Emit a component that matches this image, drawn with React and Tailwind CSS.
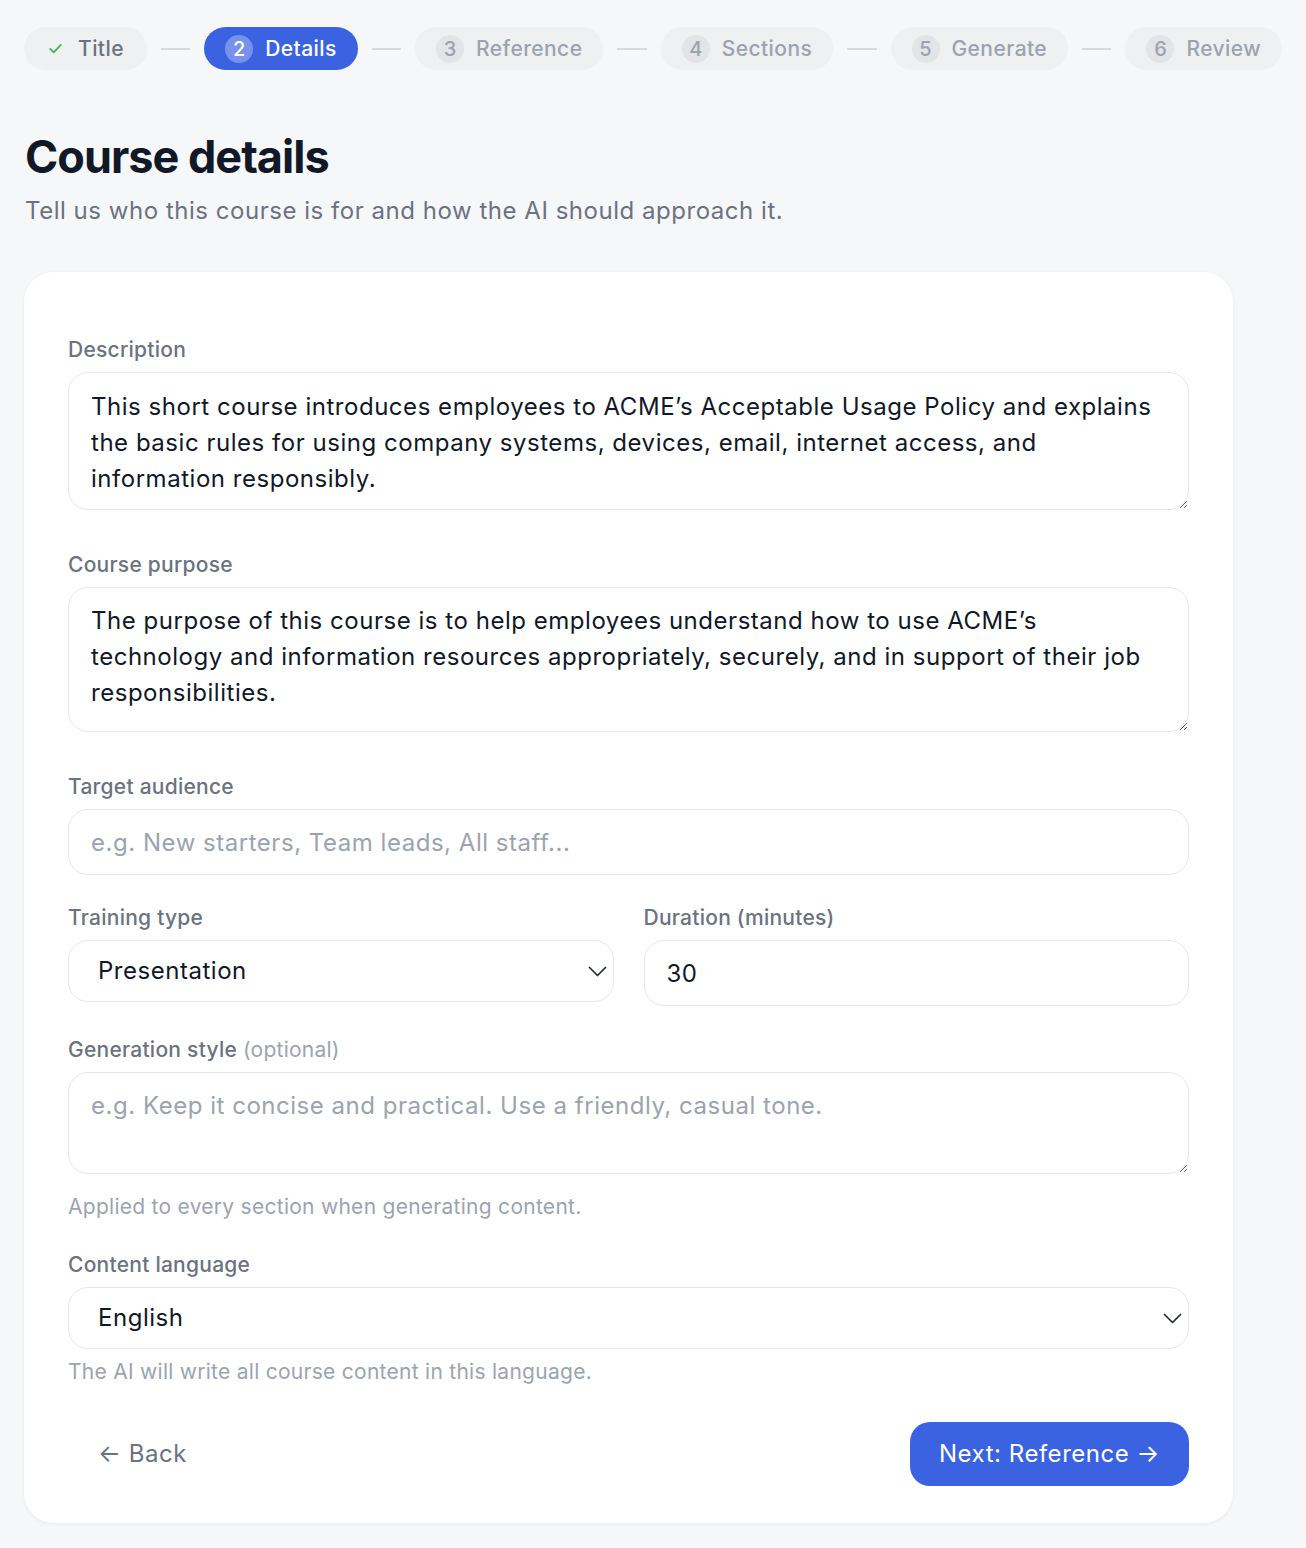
import React from "react";

function Check() {
  return (
    <svg width="17" height="17" viewBox="0 0 24 24" fill="none" stroke="#3fb950" strokeWidth="2.6" strokeLinecap="round" strokeLinejoin="round">
      <path d="M4.5 12.5l5 5L19.5 7" />
    </svg>
  );
}

function Chevron() {
  return (
    <svg width="19" height="11" viewBox="0 0 19 11" fill="none" stroke="#1f2937" strokeWidth="1.7" strokeLinecap="round" strokeLinejoin="round">
      <path d="M1.5 1.5l8 8 8-8" />
    </svg>
  );
}

function Step({ n, label }) {
  return (
    <div className="flex h-[43px] items-center gap-[12px] rounded-full bg-[#eff0f2] px-[21px]">
      <span className="flex h-[28px] w-[28px] items-center justify-center rounded-full bg-[#e3e4e8] text-[20px] font-medium text-[#9ca3af]">
        {n}
      </span>
      <span className="text-[21px] font-medium tracking-[0.02em] text-[#9ca3af]">{label}</span>
    </div>
  );
}

function Line() {
  return <div className="h-[2px] w-[30px] bg-[#d7d9de]" />;
}

const labelCls = "block text-[21px] leading-[30px] font-medium tracking-[0.012em] text-[#6b7280] mb-[7px]";
const boxCls =
  "w-full rounded-[20px] border border-[#e5e7eb] bg-white px-[22px] text-[24px] leading-[36px] tracking-[0.022em] text-[#111827] placeholder:text-[#9ca3af] outline-none";

export default function App() {
  return (
    <div className="min-h-screen bg-[#f6f7f9] px-[24px] pt-[27px] pb-[26px] font-['Inter',sans-serif]">
      {/* Stepper */}
      <div className="flex items-center gap-[14px]">
        <div className="flex h-[43px] items-center gap-[14px] rounded-full bg-[#eff0f2] px-[23px]">
          <Check />
          <span className="text-[21px] font-medium tracking-[0.02em] text-[#6b7280]">Title</span>
        </div>
        <Line />
        <div className="flex h-[43px] items-center gap-[12px] rounded-full bg-[#3b63e1] px-[21px]">
          <span className="flex h-[28px] w-[28px] items-center justify-center rounded-full bg-[#7692ec] text-[20px] font-medium text-white">
            2
          </span>
          <span className="text-[21px] font-medium tracking-[0.02em] text-white">Details</span>
        </div>
        <Line />
        <Step n="3" label="Reference" />
        <Line />
        <Step n="4" label="Sections" />
        <Line />
        <Step n="5" label="Generate" />
        <Line />
        <Step n="6" label="Review" />
      </div>

      {/* Heading */}
      <h1 className="mt-[60px] pl-[1px] text-[45px] leading-[54px] font-bold tracking-[-0.022em] text-[#111827]">
        Course details
      </h1>
      <p className="mt-[9px] pl-[1px] text-[24px] leading-[36px] tracking-[0.022em] text-[#6b7280]">
        Tell us who this course is for and how the AI should approach it.
      </p>

      {/* Card */}
      <div className="mt-[43px] w-[1209px] rounded-[30px] bg-white px-[44px] pt-[63px] pb-[37px] shadow-[0_1px_4px_rgba(15,23,42,0.06)]">
        <label className={labelCls}>Description</label>
        <textarea
          className={boxCls + " block h-[138px] pt-[16px] pb-[12px]"}
          defaultValue="This short course introduces employees to ACME’s Acceptable Usage Policy and explains the basic rules for using company systems, devices, email, internet access, and information responsibly."
        />

        <label className={labelCls + " mt-[40px]"}>Course purpose</label>
        <textarea
          className={boxCls + " block h-[145px] pt-[15px] pb-[12px]"}
          defaultValue="The purpose of this course is to help employees understand how to use ACME’s technology and information resources appropriately, securely, and in support of their job responsibilities."
        />

        <label className={labelCls + " mt-[40px]"}>Target audience</label>
        <input
          className={boxCls + " block h-[66px] py-[14px]"}
          placeholder="e.g. New starters, Team leads, All staff..."
        />

        <div className="mt-[28px] grid grid-cols-2 gap-x-[30px]">
          <div>
            <label className={labelCls}>Training type</label>
            <div className="flex h-[62px] items-center justify-between rounded-[20px] border border-[#e5e7eb] bg-white pl-[29px] pr-[6px] text-[24px] tracking-[0.022em] text-[#111827]">
              <span>Presentation</span>
              <Chevron />
            </div>
          </div>
          <div>
            <label className={labelCls}>Duration (minutes)</label>
            <input className={boxCls + " block h-[66px] py-[14px]"} defaultValue="30" />
          </div>
        </div>

        <label className={labelCls + " mt-[29px]"}>
          Generation style <span className="font-normal text-[#9ca3af]">(optional)</span>
        </label>
        <textarea
          className={boxCls + " block h-[102px] pt-[15px] pb-[13px]"}
          placeholder="e.g. Keep it concise and practical. Use a friendly, casual tone."
        />
        <p className="mt-[18px] text-[21px] leading-[30px] tracking-[0.013em] text-[#9ca3af]">
          Applied to every section when generating content.
        </p>

        <label className={labelCls + " mt-[28px]"}>Content language</label>
        <div className="flex h-[62px] items-center justify-between rounded-[20px] border border-[#e5e7eb] bg-white pl-[29px] pr-[6px] text-[24px] tracking-[0.022em] text-[#111827]">
          <span>English</span>
          <Chevron />
        </div>
        <p className="mt-[8px] text-[21px] leading-[30px] tracking-[0.013em] text-[#9ca3af]">
          The AI will write all course content in this language.
        </p>

        <div className="mt-[35px] flex items-center justify-between">
          <button className="flex h-[64px] items-center px-[30px] text-[24px] tracking-[0.022em] text-[#6b7280]">
            ← Back
          </button>
          <button className="flex h-[64px] items-center rounded-[20px] bg-[#3b63e1] px-[29px] text-[24px] tracking-[0.022em] text-white">
            Next: Reference →
          </button>
        </div>
      </div>
    </div>
  );
}
